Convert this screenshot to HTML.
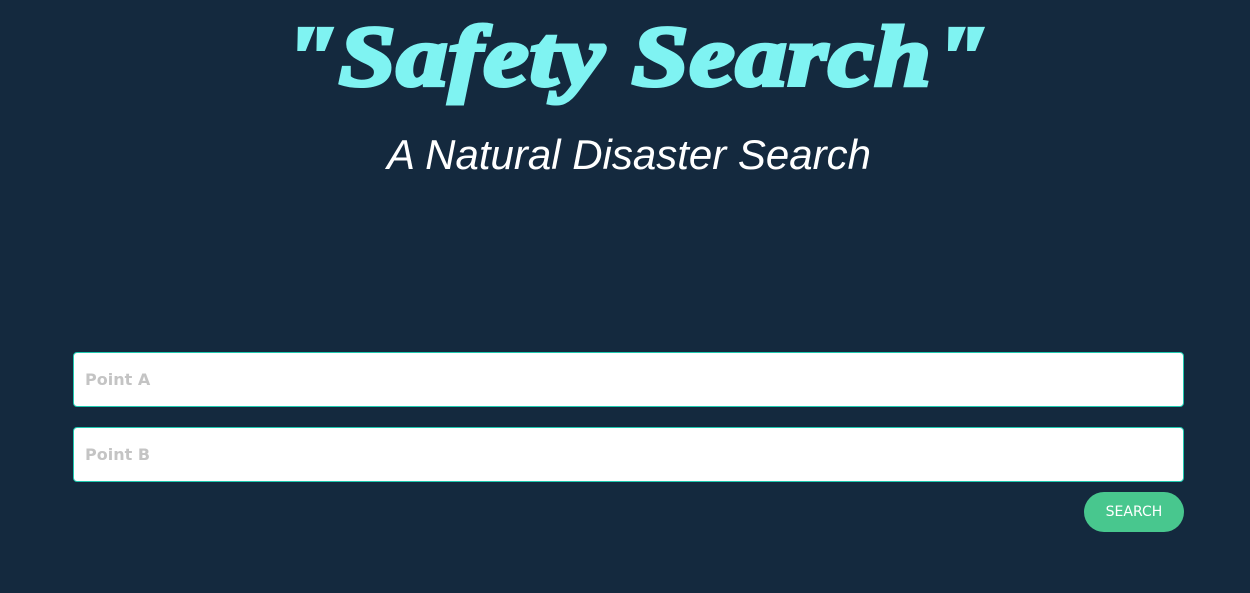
<!DOCTYPE html>
<html><head><meta charset="utf-8"><style>
html,body{margin:0;padding:0;width:1250px;height:593px;background:#14293e;overflow:hidden}
h1{position:absolute;left:12px;width:1250px;top:8px;margin:0;text-align:center;font:italic 900 86px/96px "Liberation Serif",serif;color:#7ff3f2;letter-spacing:1px;-webkit-text-stroke:4px #7ff3f2;transform:scaleX(1.18);transform-origin:633px 0}
h2{position:absolute;left:0;width:1258px;top:130px;margin:0;text-align:center;font:italic 400 42px/50px "Liberation Sans",sans-serif;color:#fff}
.in{position:absolute;left:73px;height:53px;background:#fff;border:1px solid #1fc9b0;border-radius:4px;font:bold 16px/53px "DejaVu Sans","Liberation Sans",sans-serif;color:#c4c4c4;padding-left:11px;width:1098px}
.btn{position:absolute;left:1084px;top:492px;width:100px;height:40px;border-radius:20px;background:#48c78e;color:#fff;font:14px/40px "DejaVu Sans","Liberation Sans",sans-serif;text-align:center}
</style></head><body>
<h1>"Safety Search"</h1>
<h2>A Natural Disaster Search</h2>
<div class="in" style="top:352px">Point A</div>
<div class="in" style="top:427px">Point B</div>
<div class="btn">SEARCH</div>
</body></html>
